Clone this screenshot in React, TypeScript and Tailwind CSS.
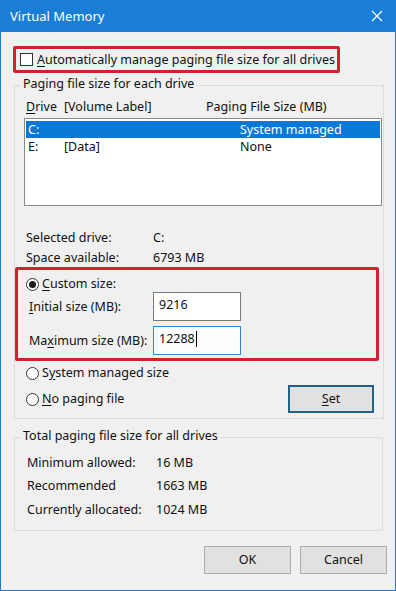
import React from "react";

const font = { fontFamily: '"Noto Sans", "Liberation Sans", sans-serif' };

function Radio({ checked }: { checked?: boolean }) {
  return (
    <span className="flex h-[13px] w-[13px] shrink-0 items-center justify-center rounded-full border border-[#333] bg-white">
      {checked && <span className="h-[7px] w-[7px] rounded-full bg-[#1a1a1a]" />}
    </span>
  );
}

function Key({ children }: { children: React.ReactNode }) {
  return <span className="underline underline-offset-2">{children}</span>;
}

export default function App() {
  return (
    <div
      style={font}
      className="flex h-[591px] w-[396px] flex-col border-x border-b border-[#1c7cd0] bg-[#f0f0f0] text-[12.5px] leading-[16px] text-[#111]"
    >
      {/* title bar */}
      <div className="-mx-px flex h-[32px] shrink-0 items-center justify-between bg-[#1a7ed6] pl-[10px] pr-[12px] text-white">
        <span className="text-[13px]">Virtual Memory</span>
        <svg width="12" height="12" viewBox="0 0 12 12" className="mr-[1px]">
          <path d="M1 1 L11 11 M11 1 L1 11" stroke="white" strokeWidth="1.2" fill="none" />
        </svg>
      </div>

      {/* auto manage */}
      <div className="ml-[12px] mt-[14px] flex h-[27px] w-[327px] items-center rounded-[2px] border-[3px] border-[#d1202e] pl-[4px]">
        <span className="h-[13px] w-[13px] shrink-0 border border-[#333] bg-white" />
        <span className="ml-[4px] whitespace-nowrap">
          <Key>A</Key>utomatically manage paging file size for all drives
        </span>
      </div>

      {/* paging file size for each drive */}
      <div className="ml-[13px] mt-[12px] flex w-[370px] flex-col border border-[#dcdcdc] pb-[5px]">
        <span className="-mt-[10px] ml-[6px] w-fit bg-[#f0f0f0] px-[2px]">Paging file size for each drive</span>
        <div className="mt-[7px] flex pl-[11px]">
          <span className="w-[38px]">
            <Key>D</Key>rive
          </span>
          <span className="w-[142px]">[Volume Label]</span>
          <span>Paging File Size (MB)</span>
        </div>
        <div className="ml-[9px] mt-[3px] h-[88px] w-[358px] border border-[#8a8a8a] bg-white px-px pt-[2px]">
          <div className="flex h-[17px] items-center bg-[#0a78d7] pl-[2px] text-white">
            <span className="w-[36px]">C:</span>
            <span className="w-[176px]"></span>
            <span>System managed</span>
          </div>
          <div className="flex h-[17px] items-center pl-[2px]">
            <span className="w-[36px]">E:</span>
            <span className="w-[176px]">[Data]</span>
            <span>None</span>
          </div>
        </div>

        <div className="mt-[24px] flex pl-[11px]">
          <span className="w-[127px]">Selected drive:</span>
          <span>C:</span>
        </div>
        <div className="mt-[4px] flex pl-[11px]">
          <span className="w-[127px]">Space available:</span>
          <span>6793 MB</span>
        </div>

        {/* custom size highlight */}
        <div className="mt-px flex h-[94px] w-[364px] flex-col rounded-[2px] border-[3px] border-[#d1202e]">
          <div className="mt-[6px] flex items-center pl-[8px]">
            <Radio checked />
            <span className="ml-[3px]">
              <Key>C</Key>ustom size:
            </span>
          </div>
          <div className="flex items-center pl-[11px]">
            <span className="w-[124px]">
              <Key>I</Key>nitial size (MB):
            </span>
            <div className="flex h-[29px] w-[88px] items-center border border-[#7a7a7a] bg-white pb-[3px] pl-[5px]">
              9216
            </div>
          </div>
          <div className="mt-[5px] flex items-center pl-[11px]">
            <span className="w-[124px]">
              Ma<Key>x</Key>imum size (MB):
            </span>
            <div className="flex h-[29px] w-[88px] items-center border border-[#2f86d4] bg-[#fbfdff] pb-[3px] pl-[5px]">
              12288
              <span className="ml-px h-[16px] w-px bg-black" />
            </div>
          </div>
        </div>

        <div className="mt-[4px] flex items-center pl-[11px]">
          <Radio />
          <span className="ml-[3px]">
            S<Key>y</Key>stem managed size
          </span>
        </div>
        <div className="mt-[4px] flex items-center justify-between pl-[11px] pr-[9px]">
          <div className="flex items-center">
            <Radio />
            <span className="ml-[3px]">
              <Key>N</Key>o paging file
            </span>
          </div>
          <button className="flex h-[28px] w-[86px] items-center justify-center border-2 border-[#22618a] bg-[#e1e1e1]">
            <span>
              <Key>S</Key>et
            </span>
          </button>
        </div>
      </div>

      {/* totals */}
      <div className="ml-[13px] mt-[18px] flex w-[369px] flex-col border border-[#dcdcdc] pb-[12px]">
        <span className="-mt-[10px] ml-[6px] w-fit bg-[#f0f0f0] px-[2px]">Total paging file size for all drives</span>
        <div className="mt-[11px] flex pl-[12px]">
          <span className="w-[129px]">Minimum allowed:</span>
          <span>16 MB</span>
        </div>
        <div className="mt-[7px] flex pl-[12px]">
          <span className="w-[129px]">Recommended</span>
          <span>1663 MB</span>
        </div>
        <div className="mt-[8px] flex pl-[12px]">
          <span className="w-[129px]">Currently allocated:</span>
          <span>1024 MB</span>
        </div>
      </div>

      <div className="mr-[8px] mt-[15px] flex justify-end gap-[9px]">
        <button className="h-[28px] w-[87px] border border-[#adadad] bg-[#e1e1e1]">OK</button>
        <button className="h-[28px] w-[87px] border border-[#adadad] bg-[#e1e1e1]">Cancel</button>
      </div>
    </div>
  );
}
